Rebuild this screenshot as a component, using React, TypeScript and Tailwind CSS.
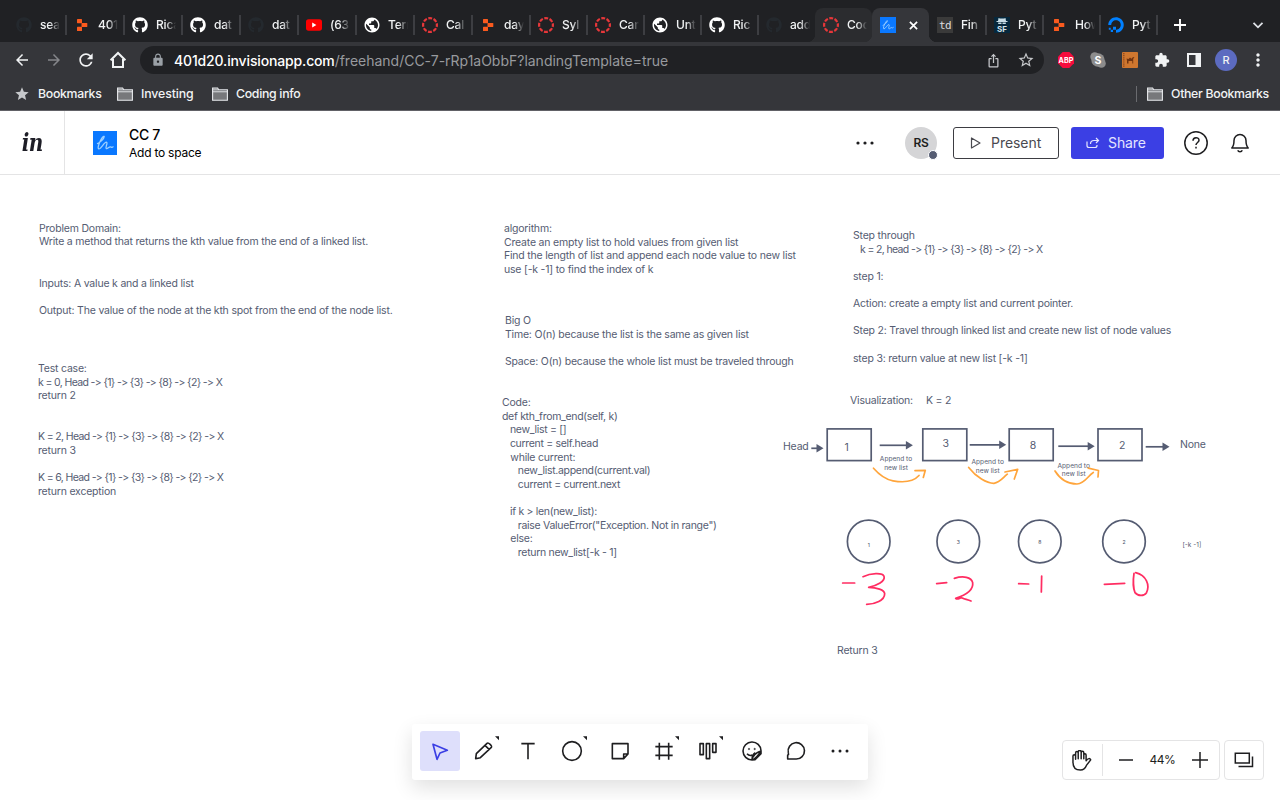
import type { ReactNode } from "react";
import { FaGithub, FaDigitalOcean } from "react-icons/fa";
import {
  MdArrowBack,
  MdArrowForward,
  MdExtension,
  MdIosShare,
  MdLock,
  MdMoreVert,
  MdPublic,
  MdRefresh,
  MdStar,
  MdStarBorder,
} from "react-icons/md";

const Github = () => <FaGithub className="size-4 text-white" />;
const GithubDark = () => <FaGithub className="size-4 text-[#24292e]" />;
const Globe = () => <MdPublic className="-m-px size-[18px] text-white" />;

const Replit = () => (
  <svg viewBox="0 0 16 16" className="size-4" fill="#fa5a1e">
    <rect x="3" y="2" width="5" height="4.200" rx=".6" />
    <rect x="7.500" y="6" width="5.800" height="4" rx=".6" />
    <rect x="3" y="9.800" width="5" height="4.200" rx=".6" />
  </svg>
);

const Canvas = () => (
  <svg viewBox="0 0 16 16" className="size-4" fill="none" stroke="#e8373a">
    <circle cx="8" cy="8" r="6.900" strokeWidth="2.200" strokeDasharray="3.900 1.520" strokeDashoffset="1.950" />
  </svg>
);

const Youtube = () => (
  <svg viewBox="0 0 16 16" className="size-4">
    <rect x="0" y="2.300" width="16" height="11.400" rx="2.600" fill="#f00" />
    <path d="M6.200 5.600v4.800L10.400 8z" fill="#fff" />
  </svg>
);

const Freehand = ({ className }: { className: string }) => (
  <svg viewBox="0 0 24 24" className={className}>
    <rect width="24" height="24" fill="#0a78ff" />
    <path
      d="M4.500 12.600C7 11.500 11 8 11.200 5.700C11 4.500 9 6.500 7.500 9.500C6 12.500 4.200 17.300 5.800 17.900C8 18.300 11 11.200 13.300 11.200C15.300 11.300 12 16.500 13.300 17.600C14.500 18.400 16 15.500 17.500 15.900C18.500 16.200 19 17 20 15.800"
      fill="none"
      stroke="#9dd0ff"
      strokeWidth="1.300"
      strokeLinecap="round"
    />
  </svg>
);

const Td = () => (
  <div className="flex size-4 items-center justify-center bg-[#3a3a3a] font-['DejaVu_Sans_Mono',monospace] text-[11px] leading-none text-[#ddd]">
    <span className="-tracking-[0.500px]">td</span>
  </div>
);

const Sf = () => (
  <div className="relative flex size-4 items-end justify-center bg-[#06283d] text-[8px] leading-[8px] font-bold text-[#d5e3ea]">
    <svg viewBox="0 0 16 8" className="absolute top-0 left-0 h-2 w-4" fill="#c7dce6">
      <path d="M4.500 1l1.500.6h4l1.500-.6.5 3h1.500v1H2.500V4H4zM4.200 5.500h3.300v1.500H4.200zM8.500 5.500h3.300v1.500H8.500z" />
    </svg>
    SF
  </div>
);

const Ocean = () => <FaDigitalOcean className="size-4 text-[#0080ff]" />;

type Tab = { icon: ReactNode; label: string; state?: "hover" | "active" | "before" };

const tabs: Tab[] = [
  { icon: <GithubDark />, label: "sea" },
  { icon: <Replit />, label: "401" },
  { icon: <Github />, label: "Rica" },
  { icon: <Github />, label: "dat" },
  { icon: <GithubDark />, label: "dat" },
  { icon: <Youtube />, label: "(63" },
  { icon: <Globe />, label: "Term" },
  { icon: <Canvas />, label: "Cal" },
  { icon: <Replit />, label: "day" },
  { icon: <Canvas />, label: "Syl" },
  { icon: <Canvas />, label: "Can" },
  { icon: <Globe />, label: "Unt" },
  { icon: <Github />, label: "Ric" },
  { icon: <GithubDark />, label: "add", state: "before" },
  { icon: <Canvas />, label: "Cod", state: "hover" },
  { icon: <Freehand className="size-4" />, label: "", state: "active" },
  { icon: <Td />, label: "Fin" },
  { icon: <Sf />, label: "Pyt" },
  { icon: <Replit />, label: "How" },
  { icon: <Ocean />, label: "Pyt" },
];

function TabStrip() {
  return (
    <div className="flex h-[42px] bg-[#202124] pt-2 pl-2">
      {tabs.map((t, i) => (
        <div
          key={i}
          className={`relative flex h-[34px] shrink-0 items-center pl-2 ${i < 9 ? "w-[58px]" : "w-[57px]"} ${
            t.state === "active" ? "rounded-t-lg bg-[#35363a]" : t.state === "hover" ? "rounded-t-lg bg-[#2b2c2f]" : ""
          }`}
        >
          {t.state === "active" && (
            <>
              <div className="absolute right-full bottom-0 size-2 bg-[radial-gradient(circle_at_0_0,transparent_8px,#35363a_8.500px)]" />
              <div className="absolute bottom-0 left-full size-2 bg-[radial-gradient(circle_at_100%_0,transparent_8px,#35363a_8.500px)]" />
            </>
          )}
          {t.state === "hover" && (
            <div className="absolute right-full bottom-0 size-2 bg-[radial-gradient(circle_at_0_0,transparent_8px,#2b2c2f_8.500px)]" />
          )}
          <div className="size-4 shrink-0">{t.icon}</div>
          {t.state === "active" ? (
            <svg viewBox="0 0 10 10" className="ml-[13px] size-[9px]" stroke="#fff" strokeWidth="1.900">
              <path d="M1 1l8 8M9 1l-8 8" />
            </svg>
          ) : (
            <div className="ml-2 w-5 overflow-hidden mask-r-from-50% mask-r-to-100% text-[12px] font-medium -tracking-[0.200px] whitespace-nowrap text-[#f1f3f4]">
              {t.label}
            </div>
          )}
          {!t.state && <div className="absolute top-[7px] right-0 h-5 w-px translate-x-[0.500px] bg-[#5b5d61]" />}
        </div>
      ))}
      <svg viewBox="0 0 12 12" className="mt-[11px] ml-[17px] size-3" stroke="#fff" strokeWidth="1.900">
        <path d="M6 0v12M0 6h12" />
      </svg>
      <svg viewBox="0 0 12 12" className="mt-[11px] mr-4 ml-auto size-3" fill="none" stroke="#dee1e6" strokeWidth="1.800">
        <path d="M1.500 3.800L6 8.300l4.500-4.500" />
      </svg>
    </div>
  );
}

function AddressBar() {
  return (
    <div className="flex h-9 items-center bg-[#35363a] text-[#f1f3f4]">
      <MdArrowBack className="ml-[13px] size-[18px]" />
      <MdArrowForward className="ml-[14px] size-[18px] text-[#85868a]" />
      <MdRefresh className="ml-[13px] size-5" />
      <svg viewBox="0 0 18 18" className="ml-[13px] size-[18px]" fill="none" stroke="currentColor" strokeWidth="2">
        <path d="M1.600 9.300L9 2l7.400 7.300M4 8v8h10V8" />
      </svg>
      <div className="ml-[13px] flex h-7 w-[904px] items-center rounded-full bg-[#202124] pl-[11px]">
        <MdLock className="size-[14px] text-[#9aa0a6]" />
        <div className="ml-[9px] text-[14px] text-[#989a9e]">
          <span className="font-medium -tracking-[0.150px] text-white">401d20.invisionapp.com</span>
          <span className="-tracking-[0.010px]">/freehand/CC-7-rRp1aObbF?landingTemplate=true</span>
        </div>
        <MdIosShare className="mr-[16px] ml-auto size-[15px] text-[#c6c8cb]" />
        <MdStarBorder className="mr-[9px] size-[18px] text-[#c6c8cb]" />
      </div>
      <svg viewBox="0 0 16 16" className="ml-[14px] size-4">
        <path d="M4.700 0h6.600L16 4.700v6.600L11.300 16H4.700L0 11.300V4.700z" fill="#f50c3d" />
        <text x="8" y="10.700" textAnchor="middle" fontSize="7.200" fontWeight="700" fill="#fff">ABP</text>
      </svg>
      <svg viewBox="0 0 16 16" className="ml-4 size-4">
        <circle cx="4.700" cy="4.700" r="4.400" fill="#8c8c8c" />
        <circle cx="8" cy="8" r="6.700" fill="#8c8c8c" />
        <circle cx="11.400" cy="11.400" r="4.400" fill="#8c8c8c" />
        <text x="7.900" y="11.600" textAnchor="middle" fontSize="10.500" fontWeight="700" fill="#fff">S</text>
      </svg>
      <svg viewBox="0 0 16 16" className="ml-4 size-4">
        <rect width="16" height="16" rx="1" fill="#cf772f" />
        <path d="M1.800 1v14" stroke="#8a451c" strokeWidth="1.300" strokeDasharray="1.200 .9" />
        <path d="M5 11.500V8.500L4.500 6.500l2 .5L8 5.500l1.500 1.300L11 5l1.500.4-1.300 1.300v4.800h-.9V9H6.500v2.500z" fill="#713410" />
      </svg>
      <MdExtension className="ml-4 size-4" />
      <svg viewBox="0 0 14 14" className="ml-[17px] size-[14px]">
        <path d="M0 0h14v14H0zM2 2v10h6.500V2z" fill="currentColor" fillRule="evenodd" />
      </svg>
      <div className="ml-[14px] flex size-[22px] items-center justify-center rounded-full bg-[#5c6bc0] text-[11px] font-medium">R</div>
      <MdMoreVert className="ml-[11px] size-5" />
    </div>
  );
}

const Folder = ({ className }: { className: string }) => (
  <svg viewBox="0 0 16 14" className={`h-[14px] w-4 ${className}`} fill="#77787b" stroke="#e8eaed" strokeWidth="1.100">
    <path d="M.6 3V1h5l1.300 2h8.500v10.300H.6z" />
    <path d="M.6 3h14.800v1.700H.6z" fill="#35363a" />
  </svg>
);

function Bookmarks() {
  return (
    <div className="flex h-[33px] items-center border-b border-[#616166] bg-[#35363a] text-[12.300px] font-medium -tracking-[0.300px] text-[#f1f3f4]">
      <MdStar className="ml-[14px] size-4 text-[#c6c8cb]" />
      <span className="ml-2 w-[63px] whitespace-nowrap">Bookmarks</span>
      <Folder className="ml-4" />
      <span className="ml-2 w-[51px] -tracking-[0.100px] whitespace-nowrap">Investing</span>
      <Folder className="ml-5" />
      <span className="ml-2">Coding info</span>
      <div className="ml-auto h-4 w-px bg-[#6a6b6f]" />
      <Folder className="ml-[10px]" />
      <span className="ml-2 w-[109px] whitespace-nowrap">Other Bookmarks</span>
    </div>
  );
}

function Header() {
  return (
    <header className="flex h-16 items-center border-b border-[#e4e4e5] bg-white">
      <div className="flex h-full w-[65px] items-center justify-center border-r border-[#e4e4e5]">
        <span className="scale-x-80 font-['DejaVu_Serif',serif] text-[25px] leading-none font-bold -tracking-[0.500px] text-[#1d1d26] italic">in</span>
      </div>
      <Freehand className="ml-7 size-6" />
      <div className="ml-3 pt-[2px]">
        <div className="text-[14px] leading-[18px] font-medium -tracking-[0.300px] text-black">CC 7</div>
        <div className="text-[12px] leading-[17px] -tracking-[0.230px] text-black">Add to space</div>
      </div>
      <svg viewBox="0 0 18 4" className="ml-auto h-1 w-[18px]" fill="#1e1e20">
        <circle cx="2" cy="2" r="1.600" />
        <circle cx="9" cy="2" r="1.600" />
        <circle cx="16" cy="2" r="1.600" />
      </svg>
      <div className="relative ml-[31px] flex size-8 items-center justify-center rounded-full bg-[#d5d5d7] text-[12px] font-semibold -tracking-[0.400px] text-[#1e1e20]">
        RS
        <div className="absolute -right-[1px] -bottom-[1px] size-[10px] rounded-full border border-white bg-[#555c72]" />
      </div>
      <button className="ml-4 flex h-8 w-[106px] items-center rounded-[3px] border border-[#3d3d42] pl-4 text-[14px] text-[#4a4a50]">
        <svg viewBox="0 0 12 12" className="size-[12px]" fill="none" stroke="currentColor" strokeWidth="1.200" strokeLinejoin="round">
          <path d="M1.500 1v10l8.500-5z" />
        </svg>
        <span className="ml-[9px] -tracking-[0.050px]">Present</span>
      </button>
      <button className="ml-3 flex h-8 w-[93px] items-center rounded-[3px] bg-[#3b3fe4] pl-[15px] text-[14px] text-[#e4e5ff]">
        <svg viewBox="0 0 14 12" className="h-3 w-[14px]" fill="none" stroke="currentColor" strokeWidth="1.200">
          <path d="M1 4.500v4q0 2 2 2h6q2 0 2-2V8M4.500 7q0-3.500 3.500-3.500h4.500M10 1l2.500 2.500L10 6" />
        </svg>
        <span className="ml-2 -tracking-[0.100px]">Share</span>
      </button>
      <svg viewBox="0 0 24 24" className="ml-5 size-6" fill="none" stroke="#1e1e20" strokeWidth="1.500">
        <circle cx="12" cy="12" r="11.200" />
        <path d="M9 9.700c0-4 6-4 6-.5 0 2.300-3 2.300-3 4.800M12 15.700v1.700" />
      </svg>
      <svg viewBox="0 0 20 20" className="mr-[30px] ml-[22px] size-5" fill="none" stroke="#1e1e20" strokeWidth="1.500" strokeLinejoin="round">
        <path d="M1.800 15c2-2 2.200-3.500 2.200-7.500a6 6 0 0 1 12 0c0 4 .2 5.500 2.200 7.500zM7.800 17.300c.5 2 3.900 2 4.400 0" />
      </svg>
    </header>
  );
}

const notes: { pos: string; text: string }[] = [
  { pos: "left-[39px] top-[46.500px]", text: "Problem Domain:\nWrite a method that returns the kth value from the end of a linked list." },
  { pos: "left-[39px] top-[102px]", text: "Inputs: A value k and a linked list\n\nOutput: The value of the node at the kth spot from the end of the node list." },
  {
    pos: "left-[38px] top-[187px]",
    text: "Test case:\nk = 0, Head -> {1} -> {3} -> {8} -> {2} -> X\nreturn 2\n\n\nK = 2, Head -> {1} -> {3} -> {8} -> {2} -> X\nreturn 3\n\nK = 6, Head -> {1} -> {3} -> {8} -> {2} -> X\nreturn exception",
  },
  {
    pos: "left-[504px] top-[47px]",
    text: "algorithm:\nCreate an empty list to hold values from given list\nFind the length of list and append each node value to new list\nuse [-k -1] to find the index of k",
  },
  {
    pos: "left-[505px] top-[139px]",
    text: "Big O\nTime: O(n) because the list is the same as given list\n\nSpace: O(n) because the whole list must be traveled through",
  },
  {
    pos: "left-[502px] top-[221px]",
    text: 'Code:\ndef kth_from_end(self, k)\n   new_list = []\n   current = self.head\n   while current:\n      new_list.append(current.val)\n      current = current.next\n\n   if k > len(new_list):\n      raise ValueError("Exception. Not in range")\n   else:\n      return new_list[-k - 1]',
  },
  {
    pos: "left-[853px] top-[54px]",
    text: "Step through\n   k = 2, head -> {1} -> {3} -> {8} -> {2} -> X\n\nstep 1:\n\nAction: create a empty list and current pointer.\n\nStep 2: Travel through linked list and create new list of node values\n\nstep 3: return value at new list [-k -1]",
  },
  { pos: "left-[850px] top-[219px]", text: "Visualization:" },
  { pos: "left-[926px] top-[219px]", text: "K = 2" },
  { pos: "left-[783px] top-[265px]", text: "Head" },
  { pos: "left-[1180px] top-[263px]", text: "None" },
  { pos: "left-[837px] top-[469px]", text: "Return 3" },
];

/* Linked-list chains and code lines are set tighter than prose. */
function lineTracking(line: string) {
  if (line.includes("->")) return "-tracking-[0.640px]";
  if (/[_"]|\.(head|next)/.test(line)) return "-tracking-[0.310px]";
  return "-tracking-[0.200px]";
}

function Note({ pos, text }: { pos: string; text: string }) {
  return (
    <div className={`absolute text-[10.500px] leading-[13.650px] whitespace-pre text-[#555c72] ${pos}`}>
      {text.split("\n").map((line, i) => (
        <div key={i} className={`h-[13.650px] ${lineTracking(line)}`}>
          {line}
        </div>
      ))}
    </div>
  );
}

const boxes = [
  { x: 827.200, label: "1", lx: 846.700, ly: 451.300 },
  { x: 922.800, label: "3", lx: 945.800, ly: 446.500 },
  { x: 1009.200, label: "8", lx: 1033, ly: 449.300 },
  { x: 1098, label: "2", lx: 1122.200, ly: 448.500 },
];

const circles = [
  { x: 868.700, label: "1", ly: 546.500 },
  { x: 958.300, label: "3", ly: 543.500 },
  { x: 1039.800, label: "8", ly: 543.500 },
  { x: 1124, label: "2", ly: 543.500 },
];

const arrows = [
  { x1: 811.300, x2: 823.500, y: 448.300 },
  { x1: 879.700, x2: 912.900, y: 445.300 },
  { x1: 969.700, x2: 1006.200, y: 444.800 },
  { x1: 1058.300, x2: 1094.700, y: 446.200 },
  { x1: 1145.700, x2: 1169.500, y: 446.800 },
];

const captions = [
  { x: 896, y: 461 },
  { x: 987.700, y: 463.800 },
  { x: 1073.700, y: 467.500 },
];

function Diagram() {
  return (
    <svg viewBox="770 410 450 210" className="absolute top-[235px] left-[770px] h-[210px] w-[450px]" fill="none">
      <g stroke="#555c72" strokeWidth="1.700">
        {boxes.map((b) => (
          <rect key={b.x} x={b.x} y="428.900" width="44" height="31.700" />
        ))}
        {circles.map((c) => (
          <circle key={c.x} cx={c.x} cy="541.500" r="21.300" />
        ))}
        {arrows.map((a) => (
          <path key={a.x1} d={`M${a.x1} ${a.y}H${a.x2 - 5}`} />
        ))}
      </g>
      <g fill="#555c72">
        {arrows.map((a) => (
          <path key={a.x1} d={`M${a.x2} ${a.y}l-7 -4.300v8.600z`} />
        ))}
        {boxes.map((b) => (
          <text key={b.x} x={b.lx} y={b.ly} textAnchor="middle" fontSize="10.500">{b.label}</text>
        ))}
        {circles.map((c) => (
          <text key={c.x} x={c.x} y={c.ly} textAnchor="middle" fontSize="5" fontWeight="500">{c.label}</text>
        ))}
        {captions.map((c) => (
          <text key={c.x} textAnchor="middle" fontSize="6.600">
            <tspan x={c.x} y={c.y}>Append to</tspan>
            <tspan x={c.x} y={c.y + 8.700}>new list</tspan>
          </text>
        ))}
        <text x="1182.500" y="546.800" fontSize="6.500">[-k -1]</text>
      </g>
      <g stroke="#ffa53c" strokeWidth="1.700" strokeLinecap="round" strokeLinejoin="round">
        <path d="M873.500 468.200Q883 479 893 480.800C905 483 914 481 919 475.500M915 470.700L925.300 470.300L923.300 477.500" />
        <path d="M968.700 467.500C976 477 987 483.500 994 483.300C1000 482.500 1003 477.500 1007.300 474.200M1005 472L1017.700 469.300L1014.300 479" />
        <path d="M1055 471C1060 479 1068 484 1077 484C1085 483.500 1088 475.500 1093.300 472.500M1088.300 468.200L1098.500 470.500L1098 477" />
      </g>
      <g stroke="#ff2d62" strokeWidth="5.200" strokeLinecap="round" strokeLinejoin="round">
        <g transform="translate(770 380) scale(.33333)">
          <path d="M218 609H254M279 590C302 579 338 577 342 589C347 604 321 617 296 622C320 622 343 630 344 641C344 661 315 673 290 673" />
          <path d="M500 611L530 608M553 595C580 587 604 591 608 608C611 630 585 646 557 655C562 660 578 652 572 651C575 656 591 658 603 663" />
        </g>
        <g transform="translate(1000 380) scale(.33333)">
          <path d="M56 611L86 612M125 588L124 636" />
          <path d="M313 613L374 610M402 580C399 600 400 627 405 638C414 649 432 649 439 639C451 615 439 586 407 578" />
        </g>
      </g>
    </svg>
  );
}

const tools: { cx: number; menu?: boolean; art: ReactNode }[] = [
  { cx: 120, art: <path stroke="#3b3fe4" strokeWidth="5" d="M99 88l43 18-22 8-9 19z" /> },
  { cx: 252, menu: true, art: <path d="M227 131l2-15 32-31c4-4 17 8 13 12l-33 31zM255 91l13 13" /> },
  { cx: 384, art: <path d="M364 86h40M384 86v47" /> },
  { cx: 516, menu: true, art: <circle cx="516" cy="108" r="28" /> },
  { cx: 660, art: <path d="M637 86h47v31l-13 14h-34zM684 117h-13v14" /> },
  { cx: 792, menu: true, art: <path d="M778 83v51M806 83v51M766 95h52M766 121h52" /> },
  { cx: 924, menu: true, art: <path d="M900 86h10v33h-10zM919 86h10v45h-10zM938 86h10v26h-10z" /> },
  {
    cx: 1056,
    art: (
      <>
        <path d="M1083 107a27 27 0 1 0-27 28q2-18 27-28M1056 135q13-3 27-28v9l-18 18zM1056 135c0-10 2-18 10-22M1041 116q7 8 16 4" />
        <circle cx="1047" cy="102" r="2.500" fill="#1e1e20" strokeWidth="1" />
        <circle cx="1064" cy="102" r="2.500" fill="#1e1e20" strokeWidth="1" />
      </>
    ),
  },
  { cx: 1188, art: <path d="M1163 132v-11q4-2 2-8a24.500 24.500 0 1 1 23 19z" /> },
  {
    cx: 1320,
    art: (
      <g fill="#1e1e20" stroke="none">
        <circle cx="1299" cy="108" r="4.500" />
        <circle cx="1320" cy="108" r="4.500" />
        <circle cx="1341" cy="108" r="4.500" />
      </g>
    ),
  },
];

function Toolbar() {
  return (
    <div className="absolute top-[549px] left-[412px] flex h-14 w-[456px] gap-1 rounded-[3px] bg-white px-2 pt-[7px] shadow-[0_8px_20px_rgba(0,0,0,0.120)]">
      {tools.map((t, i) => (
        <button key={t.cx} className={`size-10 shrink-0 rounded-[3px] ${i === 0 ? "bg-[#dedffb]" : ""} ${i === 3 ? "mr-1" : ""}`}>
          <svg viewBox={`${t.cx - 60} 48 120 120`} className="size-10" fill="none" stroke="#1e1e20" strokeWidth="4.800" strokeLinejoin="round">
            {t.art}
            {t.menu && <path d={`M${t.cx + 33} 64h12v12z`} fill="#1e1e20" stroke="none" />}
          </svg>
        </button>
      ))}
    </div>
  );
}

function ZoomControls() {
  return (
    <div className="absolute top-[565px] left-[1062px] flex gap-1">
      <div className="flex h-10 w-[158px] items-center rounded-[4px] border border-[#e4e4e5] bg-white">
        <svg viewBox="93 73 64 64" className="ml-2 size-[21px]" fill="none" stroke="#1e1e20" strokeWidth="4.500" strokeLinecap="round" strokeLinejoin="round">
          <path d="M99 110V91c0-5 8-5 8 0v10V82c0-6 8-6 8 0v18V79c0-6 9-6 9 0v21V81c0-6 8-6 8 0v19V88c0-5 7-5 7 0v18c6-9 12-8 14-3l-13 17c-4 10-10 14-18 14c-14 0-23-9-23-24" />
        </svg>
        <div className="ml-[10px] h-8 w-px bg-[#e4e4e5]" />
        <svg viewBox="0 0 14 14" className="ml-4 size-[14px]" stroke="#1e1e20" strokeWidth="1.500">
          <path d="M0 7h14" />
        </svg>
        <span className="w-[59px] text-center text-[12px] -tracking-[0.500px] text-[#1e1e20]">44%</span>
        <svg viewBox="0 0 16 16" className="size-4" stroke="#1e1e20" strokeWidth="1.500">
          <path d="M0 8h16M8 0v16" />
        </svg>
      </div>
      <div className="flex size-10 items-center justify-center rounded-[4px] border border-[#e4e4e5] bg-white">
        <svg viewBox="0 0 20 16" className="h-4 w-5" fill="none" stroke="#1e1e20" strokeWidth="1.500">
          <path d="M1.300 1.300h14v9.700h-14zM18.500 4.500v10h-14" />
        </svg>
      </div>
    </div>
  );
}

export default function App() {
  return (
    <div className="flex h-[800px] w-[1280px] flex-col overflow-hidden bg-white font-['Inter',sans-serif]">
      <TabStrip />
      <AddressBar />
      <Bookmarks />
      <Header />
      <main className="relative flex-1 bg-white">
        {notes.map((n) => (
          <Note key={n.text} pos={n.pos} text={n.text} />
        ))}
        <Diagram />
        <Toolbar />
        <ZoomControls />
      </main>
    </div>
  );
}
